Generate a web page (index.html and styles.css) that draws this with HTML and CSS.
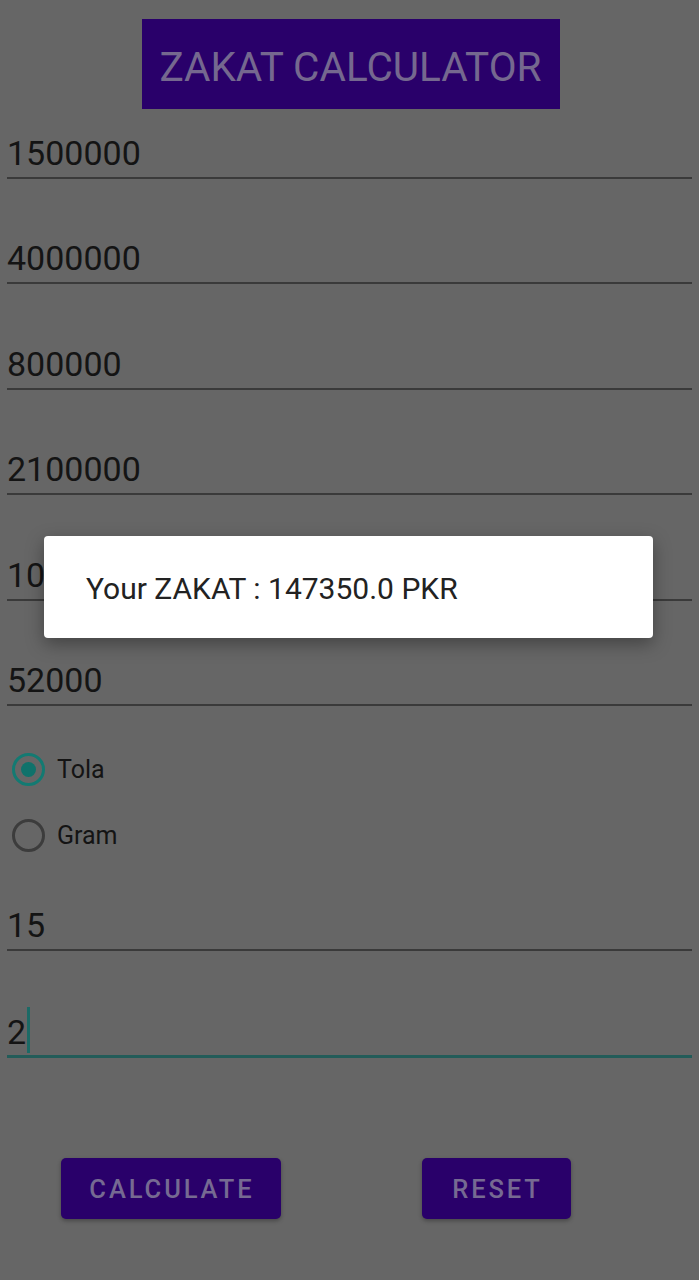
FILE: index.html
```html
<!DOCTYPE html>
<html>
<head>
<meta charset="utf-8">
<link rel="stylesheet" href="styles.css">
</head>
<body>
<div class="screen">
  <div class="title-wrap"><div class="title">ZAKAT CALCULATOR</div></div>
  <div class="fields">
    <div class="field">1500000</div>
    <div class="field">4000000</div>
    <div class="field">800000</div>
    <div class="field">2100000</div>
    <div class="field">1000000</div>
    <div class="field">52000</div>
  </div>
  <div class="radios">
    <div class="radio-row"><span class="radio checked"></span><span class="radio-label">Tola</span></div>
    <div class="radio-row"><span class="radio"></span><span class="radio-label">Gram</span></div>
  </div>
  <div class="fields fields2">
    <div class="field">15</div>
    <div class="field focused">2<span class="cursor"></span></div>
  </div>
  <div class="buttons">
    <div class="btn btn-calc">CALCULATE</div>
    <div class="btn btn-reset">RESET</div>
  </div>
  <div class="dialog">Your ZAKAT : 147350.0 PKR</div>
</div>
</body>
</html>
```

FILE: styles.css
```css
html, body {
  margin: 0;
  padding: 0;
  background: #666666;
}
body {
  font-family: Roboto, "Noto Sans", sans-serif;
}
.screen {
  position: relative;
  width: 699px;
  height: 1280px;
  box-sizing: border-box;
  padding: 19px 7px 0 7px;
}
.title-wrap {
  display: flex;
  justify-content: center;
}
.title {
  width: 418px;
  height: 90px;
  margin-left: 2px;
  background: #29006a;
  color: #75688f;
  font-size: 40.5px;
  display: flex;
  align-items: center;
  justify-content: center;
  padding-top: 5px;
  box-sizing: border-box;
}
.fields {
  display: flex;
  flex-direction: column;
  gap: 43.4px;
  margin-top: 8px;
}
.field {
  font-size: 34px;
  line-height: 40px;
  height: 40px;
  padding-top: 16px;
  padding-bottom: 4px;
  border-bottom: 2px solid #3a3a3a;
  color: #141414;
  display: flex;
  align-items: center;
}
.field.focused {
  border-bottom: 3px solid #235c59;
  padding-bottom: 3px;
}
.cursor {
  display: block;
  width: 3px;
  height: 46px;
  background: #1c6a66;
  margin-left: 1px;
  align-self: flex-start;
  margin-top: -5px;
  margin-bottom: -6px;
}
.radios {
  margin-top: 31px;
  display: flex;
  flex-direction: column;
}
.radio-row {
  height: 66px;
  display: flex;
  align-items: center;
}
.radio {
  width: 27px;
  height: 27px;
  border: 3px solid #3c3c3c;
  border-radius: 50%;
  margin-left: 5px;
  box-sizing: content-box;
  position: relative;
}
.radio.checked {
  border-color: #137a72;
}
.radio.checked::after {
  content: "";
  position: absolute;
  left: 6px;
  top: 6px;
  width: 15px;
  height: 15px;
  border-radius: 50%;
  background: #0f726b;
}
.radio-label {
  margin-left: 12px;
  font-size: 25px;
  color: #141414;
}
.fields2 {
  margin-top: 20px;
  gap: 45.5px;
}
.buttons {
  display: flex;
  margin-top: 100px;
}
.btn {
  height: 61px;
  border-radius: 5px;
  background: #29006a;
  color: #766a92;
  font-size: 25.5px;
  font-weight: 500;
  letter-spacing: 2.9px;
  display: flex;
  align-items: center;
  justify-content: center;
  box-shadow: 0 2px 4px rgba(0,0,0,0.3);
  box-sizing: border-box;
  padding-left: 2px;
}
.btn-calc {
  width: 220px;
  margin-left: 54px;
}
.btn-reset {
  width: 149px;
  margin-left: 141px;
}
.dialog {
  position: absolute;
  left: 44px;
  top: 536px;
  width: 609px;
  height: 102px;
  background: #ffffff;
  border-radius: 4px;
  box-shadow: 0 6px 18px rgba(0,0,0,0.35);
  box-sizing: border-box;
  padding-left: 42px;
  display: flex;
  align-items: center;
  font-size: 30px;
  color: #222222;
  padding-top: 2px;
}
```
